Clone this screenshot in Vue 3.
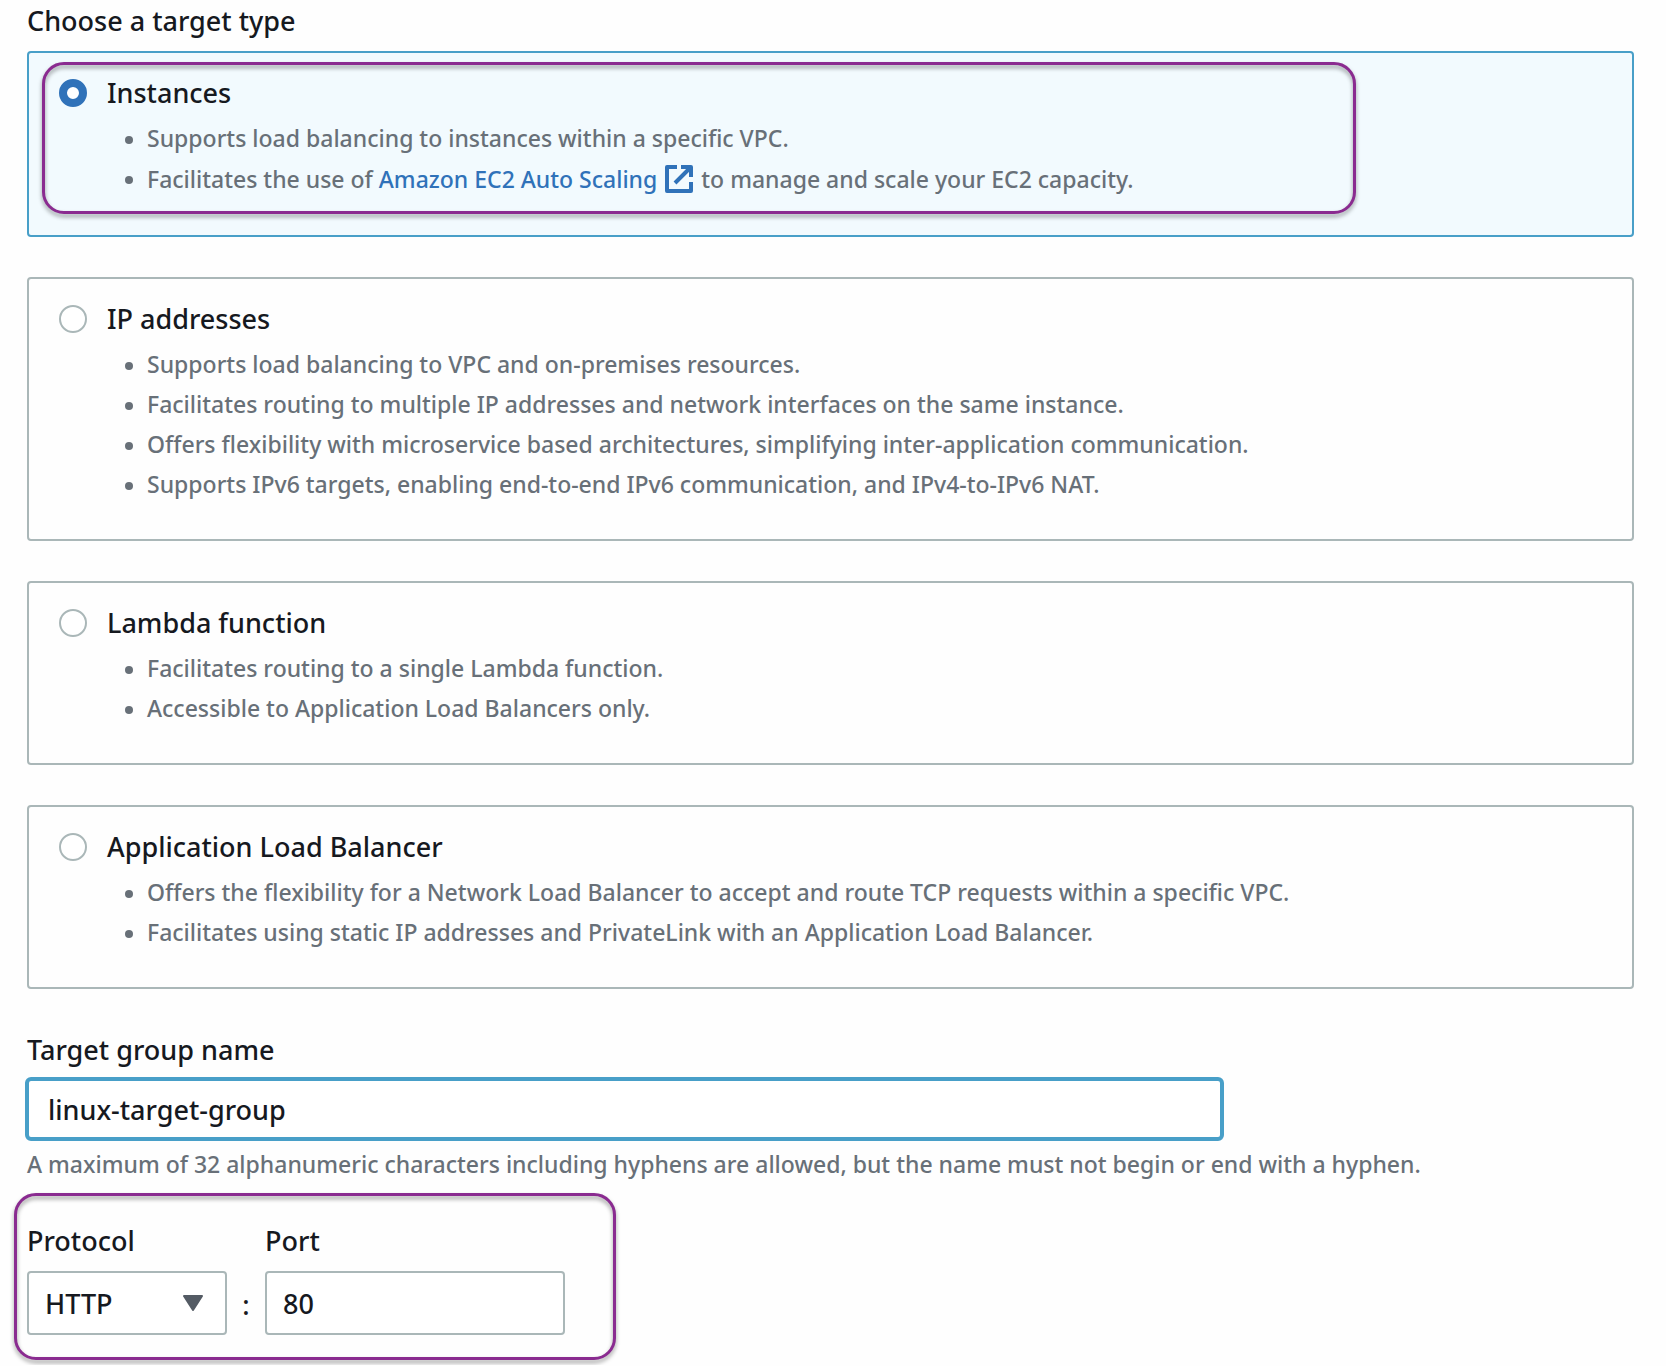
<script setup>
import { ref } from 'vue'

const selected = ref('instances')
const groupName = ref('linux-target-group')
const protocol = ref('HTTP')
const port = ref('80')

const targetTypes = [
  {
    id: 'instances',
    title: 'Instances',
    points: [
      { text: 'Supports load balancing to instances within a specific VPC.' },
      { text: 'Facilitates the use of ', link: 'Amazon EC2 Auto Scaling', after: 'to manage and scale your EC2 capacity.' }
    ]
  },
  {
    id: 'ip',
    title: 'IP addresses',
    points: [
      { text: 'Supports load balancing to VPC and on-premises resources.' },
      { text: 'Facilitates routing to multiple IP addresses and network interfaces on the same instance.' },
      { text: 'Offers flexibility with microservice based architectures, simplifying inter-application communication.' },
      { text: 'Supports IPv6 targets, enabling end-to-end IPv6 communication, and IPv4-to-IPv6 NAT.' }
    ]
  },
  {
    id: 'lambda',
    title: 'Lambda function',
    points: [
      { text: 'Facilitates routing to a single Lambda function.' },
      { text: 'Accessible to Application Load Balancers only.' }
    ]
  },
  {
    id: 'alb',
    title: 'Application Load Balancer',
    points: [
      { text: 'Offers the flexibility for a Network Load Balancer to accept and route TCP requests within a specific VPC.' },
      { text: 'Facilitates using static IP addresses and PrivateLink with an Application Load Balancer.' }
    ]
  }
]
</script>

<template>
  <form class="page" @submit.prevent>
    <fieldset class="types">
      <legend class="label">Choose a target type</legend>
      <div class="cards">
        <section
          v-for="type in targetTypes"
          :key="type.id"
          class="card"
          :class="{ selected: selected === type.id }"
        >
          <input :id="type.id" v-model="selected" class="radio" type="radio" name="target-type" :value="type.id" />
          <div class="body">
            <label class="title" :for="type.id">{{ type.title }}</label>
            <ul class="points">
              <li v-for="point in type.points" :key="point.text" class="point" :class="{ linked: point.link }">
                {{ point.text }}<template v-if="point.link"><a class="link" href="#">{{ point.link }}<svg class="external" viewBox="0 0 28 28" aria-hidden="true"><path d="M12 2H2v24h24V17M16 2h10v10M25 3L10 18" /></svg></a>{{ point.after }}</template>
              </li>
            </ul>
          </div>
          <span v-if="type.id === 'instances'" class="outline outline-card" aria-hidden="true"></span>
        </section>
      </div>
    </fieldset>

    <div class="field">
      <label class="label" for="group-name">Target group name</label>
      <input id="group-name" v-model="groupName" class="control name" type="text" />
      <p class="hint">A maximum of 32 alphanumeric characters including hyphens are allowed, but the name must not begin or end with a hyphen.</p>
    </div>

    <div class="endpoint">
      <span class="outline outline-endpoint" aria-hidden="true"></span>
      <div class="column">
        <label class="label" for="protocol">Protocol</label>
        <div class="select">
          <select id="protocol" v-model="protocol" class="control">
            <option>HTTP</option>
            <option>HTTPS</option>
          </select>
          <svg class="caret" viewBox="0 0 20 16" aria-hidden="true"><path d="M1 1h18l-9 14z" /></svg>
        </div>
      </div>
      <span class="colon">:</span>
      <div class="column port">
        <label class="label" for="port">Port</label>
        <input id="port" v-model="port" class="control" type="text" inputmode="numeric" />
      </div>
    </div>
  </form>
</template>

<style>
body {
  margin: 0;
  background: #fefefe;
}
</style>

<style scoped>
.page {
  padding: 0 32px 30px 27px;
  font-family: "Noto Sans", "Open Sans", sans-serif;
  font-weight: 500;
  color: #16191f;
}

.types {
  margin: 0;
  padding: 0;
  border: 0;
  min-width: 0;
}

.label {
  display: block;
  padding: 0;
  font-size: 27px;
  line-height: 41px;
}

.cards {
  display: flex;
  flex-direction: column;
  gap: 40px;
  padding-top: 10px;
}

.card {
  position: relative;
  display: flex;
  gap: 20px;
  padding: 20px 30px 35px;
  border: 2px solid #aab7b8;
  border-radius: 4px;
}

.card.selected {
  border-color: #489fc8;
  background: #f2fafe;
}

.radio {
  flex: none;
  appearance: none;
  box-sizing: border-box;
  width: 28px;
  height: 28px;
  margin: 6px 0 0;
  border: 2px solid #aab7b8;
  border-radius: 50%;
  background: #fff;
}

.radio:checked {
  border: 8px solid #3072b9;
}

.body {
  flex: 1;
  min-width: 0;
}

.title {
  display: block;
  font-size: 27px;
  line-height: 40px;
}

.points {
  margin: 5px 0 0;
  padding: 0;
  list-style: none;
  font-size: 23px;
  line-height: 40px;
  color: #687078;
}

.point {
  position: relative;
  padding-left: 40px;
}

.point::before {
  content: "";
  position: absolute;
  left: 18px;
  top: 18px;
  width: 8px;
  height: 8px;
  border-radius: 50%;
  background: currentColor;
}

.linked {
  line-height: 42px;
}

.link {
  color: #3072b9;
  text-decoration: none;
}

.external {
  width: 28px;
  height: 28px;
  margin: 0 8px;
  vertical-align: -5px;
  fill: none;
  stroke: currentColor;
  stroke-width: 4;
  stroke-linejoin: round;
}

.outline {
  position: absolute;
  box-sizing: border-box;
  border: 3px solid #8a2b90;
  border-radius: 22px;
  filter: drop-shadow(0 3px 2px rgb(0 0 0 / 40%));
  pointer-events: none;
}

.outline-card {
  inset: 9px 276px 21px 13px;
}

.field {
  padding-top: 40px;
}

.control {
  box-sizing: border-box;
  width: 100%;
  height: 64px;
  margin: 0;
  padding: 0 16px;
  border: 2px solid #aab7b8;
  border-radius: 4px;
  background: #fff;
  color: inherit;
  font: inherit;
  font-size: 27px;
  appearance: none;
}

.name {
  display: block;
  width: calc(75% - 6px);
  margin: 7px 0 0 -2px;
  padding: 0 19px;
  border: 4px solid #489fc8;
  border-radius: 6px;
}

.hint {
  margin: 4px 0 0;
  font-size: 23px;
  line-height: 38px;
  color: #687078;
}

.endpoint {
  position: relative;
  display: flex;
  align-items: flex-end;
  width: 538px;
  padding-top: 37px;
}

.outline-endpoint {
  inset: 10px -51px -25px -13px;
}

.column {
  flex: 2;
}

.port {
  flex: 3;
}

.column .label {
  padding-bottom: 10px;
}

.select {
  position: relative;
}

.select .control,
.port .control {
  display: block;
}

.caret {
  position: absolute;
  right: 24px;
  top: 24px;
  width: 20px;
  height: 16px;
  fill: #545b64;
  stroke: #545b64;
  stroke-width: 2;
  stroke-linejoin: round;
  pointer-events: none;
}

.colon {
  width: 38px;
  font-size: 27px;
  line-height: 60px;
  text-align: center;
}
</style>
